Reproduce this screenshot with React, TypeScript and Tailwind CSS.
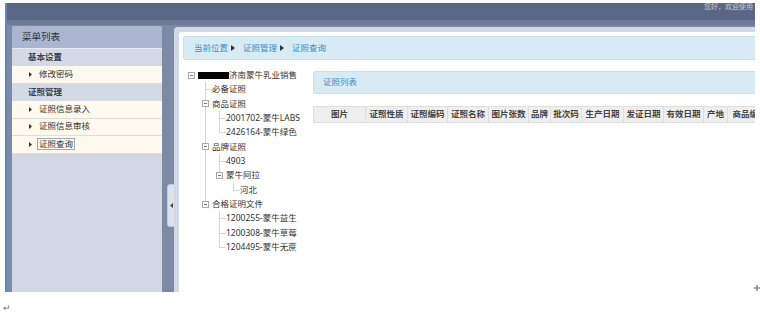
import React from 'react';

type TreeNode = {
  label: React.ReactNode;
  children?: TreeNode[];
};

const tree: TreeNode = {
  label: (
    <span className="flex items-center">
      <span className="inline-block w-[31px] h-[7px] bg-black" />
      <span>济南蒙牛乳业销售</span>
    </span>
  ),
  children: [
    { label: '必备证照' },
    {
      label: '商品证照',
      children: [{ label: '2001702-蒙牛LABS' }, { label: '2426164-蒙牛绿色' }],
    },
    {
      label: '品牌证照',
      children: [{ label: '4903' }, { label: '蒙牛阿拉', children: [{ label: '河北' }] }],
    },
    {
      label: '合格证明文件',
      children: [
        { label: '1200255-蒙牛益生' },
        { label: '1200308-蒙牛草莓' },
        { label: '1204495-蒙牛无蔗' },
      ],
    },
  ],
};

type FlatRow = { depth: number; guides: boolean[]; last: boolean; node: TreeNode };

function flatten(node: TreeNode, depth: number, guides: boolean[], last: boolean, out: FlatRow[]) {
  out.push({ depth, guides, last, node });
  const kids = node.children || [];
  kids.forEach((child, i) => {
    const childLast = i === kids.length - 1;
    // the column of this node keeps a line if it has a sibling below
    const nextGuides = depth === 0 ? [false] : [...guides, !last];
    flatten(child, depth + 1, nextGuides, childLast, out);
  });
  return out;
}

const Toggle = () => (
  <span className="relative z-10 flex items-center justify-center w-[7px] h-[7px] border border-[#a9a9a9] bg-white">
    <span className="w-[3px] h-px bg-[#777]" />
  </span>
);

const TreeRow: React.FC<{ row: FlatRow }> = ({ row }) => {
  const { depth, guides, last, node } = row;
  const hasKids = !!node.children?.length;

  return (
    <div className="flex h-[14.33px] items-center whitespace-nowrap">
      {depth === 0 ? (
        <span className="flex shrink-0 w-[14px] h-full items-center justify-center">
          <Toggle />
        </span>
      ) : (
        <>
          {guides.map((g, i) => (
            <span key={i} className="relative shrink-0 w-[14px] h-full">
              {g && <span className="absolute left-[7px] top-0 h-full w-px bg-[#d6d6d6]" />}
            </span>
          ))}
          <span className="relative flex shrink-0 w-[14px] h-full items-center justify-center">
            <span
              className={`absolute left-[7px] top-0 w-px bg-[#d6d6d6] ${last ? 'h-1/2' : 'h-full'}`}
            />
            {hasKids ? (
              <Toggle />
            ) : (
              <span className="absolute left-[7px] top-1/2 h-px w-[7px] bg-[#d6d6d6]" />
            )}
          </span>
        </>
      )}
      <span className="shrink-0 text-[8.5px] leading-[14px] text-[#333]">{node.label}</span>
    </div>
  );
};

const Arrow = () => (
  <svg width="4" height="6" viewBox="0 0 4 6" className="ml-[3px] mr-[8px]">
    <path d="M0 0 L4 3 L0 6 Z" fill="#333" />
  </svg>
);

const SideArrow = () => (
  <svg width="3" height="5" viewBox="0 0 3 5" className="mr-[7px]">
    <path d="M0 0 L3 2.5 L0 5 Z" fill="#333" />
  </svg>
);

const columns: [string, number][] = [
  ['图片', 52],
  ['证照性质', 42],
  ['证照编码', 40],
  ['证照名称', 41],
  ['图片张数', 40],
  ['品牌', 22],
  ['批次码', 31],
  ['生产日期', 42],
  ['发证日期', 40],
  ['有效日期', 40],
  ['产地', 24],
  ['商品编码', 44],
  ['操作', 40],
];

const colClass: Record<number, string> = {
  52: 'w-[52px]',
  42: 'w-[42px]',
  40: 'w-[40px]',
  41: 'w-[41px]',
  22: 'w-[22px]',
  31: 'w-[31px]',
  24: 'w-[24px]',
  44: 'w-[44px]',
};

export default function App() {
  const rows = flatten(tree, 0, [], true, []);

  return (
    <div className="w-[760px] h-[314px] bg-white overflow-hidden font-['Noto_Sans','Noto_Sans_CJK_SC',sans-serif]">
      <div className="flex">
        <div className="ml-[5px] mt-[3px] w-[750px] h-[289px] flex flex-col bg-[#7d8aa5] border-l-2 border-[#5d87bf] overflow-hidden">
          {/* top bar */}
          <div className="h-[17px] bg-[#5a6784] flex justify-end pr-[2px]">
            <span className="-mt-[1px] text-[7px] leading-[9px] text-[#c3cad9] whitespace-nowrap">
              您好，欢迎使用
            </span>
          </div>
          <div className="h-[5px] bg-[#6c7997]" />

          <div className="flex flex-1 min-h-0">
            {/* sidebar */}
            <div className="ml-[5px] mt-[1px] w-[150px] bg-[#d1d8e3] rounded-t-[3px] flex flex-col">
              <div className="h-[22px] bg-[#aab5cf] rounded-t-[3px] pl-[10px] flex items-center text-[9.5px] text-[#2f3440]">
                菜单列表
              </div>
              <div className="h-[18px] bg-[#d4dae5] border-t border-[#e8ecf2] pl-[16px] flex items-center text-[8.5px] font-bold text-[#3a3f4a]">
                基本设置
              </div>
              <div className="h-[18px] bg-[#fdf9ef] border-b border-[#e0ddd6] pl-[17px] flex items-center text-[8.5px] text-[#333]">
                <SideArrow />
                修改密码
              </div>
              <div className="h-[17px] bg-[#d4dae5] pl-[16px] flex items-center text-[8.5px] font-bold text-[#3a3f4a]">
                证照管理
              </div>
              <div className="h-[17.5px] bg-[#fdf9ef] border-b border-[#e0ddd6] pl-[17px] flex items-center text-[8.5px] text-[#333]">
                <SideArrow />
                证照信息录入
              </div>
              <div className="h-[17.5px] bg-[#fdf9ef] border-b border-[#e0ddd6] pl-[17px] flex items-center text-[8.5px] text-[#333]">
                <SideArrow />
                证照信息审核
              </div>
              <div className="h-[17.5px] bg-[#fdf9ef] border-b border-[#e0ddd6] pl-[17px] flex items-center text-[8.5px] text-[#333]">
                <SideArrow />
                <span className="-ml-[2px] px-[1px] h-[12px] flex items-center border border-[#a8a8a8]">证照查询</span>
              </div>
            </div>

            {/* gutter with collapse handle */}
            <div className="w-[12px] flex flex-col">
              <div className="ml-[5px] mt-[159px] w-[8px] h-[43px] bg-[#dbe2ed] border border-[#c2cbd9] rounded-l-[3px] flex items-center justify-center">
                <svg width="3" height="5" viewBox="0 0 3 5">
                  <path d="M3 0 L0 2.5 L3 5 Z" fill="#444" />
                </svg>
              </div>
            </div>

            {/* main panel */}
            <div className="flex-1 mt-[2px] bg-[#d3d9e3] rounded-tl-[4px] pl-[5px] pt-[5px] min-w-0">
              <div className="h-full bg-white rounded-tl-[3px] overflow-hidden">
                <div className="ml-[4px] mt-[4px] -mr-[10px] h-[24px] bg-[#d8ebf4] border border-[#c6e1ee] rounded-[2px] pl-[10px] flex items-center text-[8.5px] text-[#3a8cc3]">
                  <span>当前位置</span>
                  <Arrow />
                  <span>证照管理</span>
                  <Arrow />
                  <span>证照查询</span>
                </div>

                <div className="flex mt-[8px] ml-[5px]">
                  <div className="w-[116px] shrink-0 overflow-hidden">
                    {rows.map((r, i) => (
                      <TreeRow key={i} row={r} />
                    ))}
                  </div>

                  <div className="ml-[13px] mt-[3px] flex-1 min-w-0">
                    <div className="-mr-[10px] h-[23px] bg-[#d8ebf4] border border-[#c6e1ee] rounded-[2px] pl-[9px] flex items-center text-[8.5px] text-[#3a8cc3]">
                      证照列表
                    </div>
                    <div className="mt-[12px] flex h-[17px] w-max bg-[#efefef] border border-[#dedede]">
                      {columns.map(([name, w]) => (
                        <div
                          key={name}
                          className={`${colClass[w]} shrink-0 border-r border-[#dedede] flex items-center justify-center text-[8.5px] font-bold text-[#444] whitespace-nowrap`}
                        >
                          {name}
                        </div>
                      ))}
                    </div>
                  </div>
                </div>
              </div>
            </div>
          </div>
        </div>

        <div className="w-[5px] flex flex-col justify-end">
          <svg width="6" height="6" viewBox="0 0 6 6" className="-ml-[1px] mb-[1px]">
            <path d="M3 0 V6 M0 3 H6" stroke="#888" strokeWidth="1.5" />
          </svg>
        </div>
      </div>

      <div className="mt-[11px] ml-[3px] text-[9px] leading-[10px] text-[#777]">↵</div>
    </div>
  );
}
